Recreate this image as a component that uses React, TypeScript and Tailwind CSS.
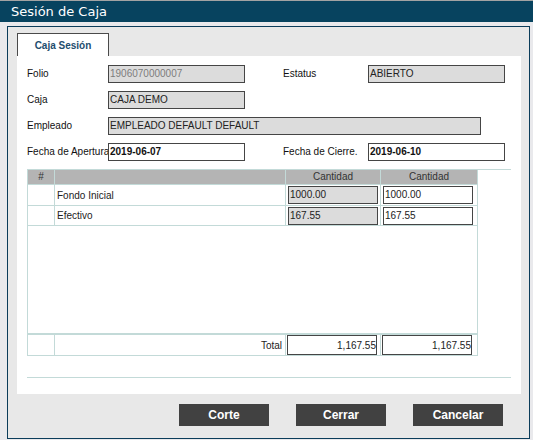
const teal = 'border-[#c3dad8]'

function Field({ value, width, gray = true, bold = false, muted = false }: { value: string; width: string; gray?: boolean; bold?: boolean; muted?: boolean }) {
  return (
    <div
      className={`${width} h-[18px] flex items-center border border-[#454545] pl-px text-[10px] leading-none ${
        gray ? 'bg-[#dcdcdc]' : 'bg-white'
      } ${bold ? 'font-bold text-[#111]' : muted ? 'text-[#7d7d7d]' : 'text-[#222]'}`}
    >
      {value}
    </div>
  )
}

function Label({ text, width }: { text: string; width: string }) {
  return <div className={`${width} text-[10px] text-[#111] leading-none whitespace-nowrap`}>{text}</div>
}

function Button({ text }: { text: string }) {
  return (
    <button className="w-[90px] h-[22px] bg-[#414141] text-white text-[12px] font-bold">{text}</button>
  )
}

export default function App() {
  return (
    <div className="w-[533px] h-[440px] bg-[#e9e9ec] overflow-hidden" style={{ fontFamily: '"Liberation Sans", Arial, sans-serif' }}>
      {/* Title bar */}
      <div className="border-t border-[#a3a3a3]">
        <div
          className="h-[21px] bg-[#07435f] text-white text-[13px] pl-[11px] flex items-center"
          style={{ fontFamily: '"DejaVu Sans", Verdana, sans-serif' }}
        >
          Sesión de Caja
        </div>
      </div>

      {/* Window */}
      <div className="mt-[4px] ml-[7px] w-[523px] h-[413px] border border-[#0b3c5a] bg-[#e8e8e8] pt-[6px]">
        <div className="ml-[9px] w-[92px] h-[23px] bg-white border border-b-0 border-[#4a4a4a] flex items-center justify-center text-[10px] font-bold text-[#1d4d6e]">
          Caja Sesión
        </div>

        <div className="ml-[9px] w-[504px] h-[338px] bg-white pt-[9px] pl-[10px]">
          <div className="flex flex-col gap-[8px]">
            <div className="flex items-center">
              <Label text="Folio" width="w-[81px]" />
              <Field value="1906070000007" width="w-[137px]" muted />
              <div className="w-[38px]" />
              <Label text="Estatus" width="w-[85px]" />
              <Field value="ABIERTO" width="w-[137px]" />
            </div>
            <div className="flex items-center">
              <Label text="Caja" width="w-[81px]" />
              <Field value="CAJA DEMO" width="w-[137px]" />
            </div>
            <div className="flex items-center">
              <Label text="Empleado" width="w-[81px]" />
              <Field value="EMPLEADO DEFAULT DEFAULT" width="w-[373px]" />
            </div>
            <div className="flex items-center">
              <Label text="Fecha de Apertura" width="w-[81px]" />
              <Field value="2019-06-07" width="w-[137px]" gray={false} bold />
              <div className="w-[38px]" />
              <Label text="Fecha de Cierre." width="w-[85px]" />
              <Field value="2019-06-10" width="w-[137px]" gray={false} bold />
            </div>
          </div>

          {/* Grid */}
          <div className={`mt-[8px] w-[484px] border-t ${teal}`}>
            <div className={`w-[451px] border-l border-r border-b ${teal} text-[10px] text-[#222]`}>
              <div className="flex h-[14px] bg-[#b4b4b4] text-[#333] leading-[14px]">
                <div className={`w-[27px] border-r ${teal} text-center`}>#</div>
                <div className={`w-[231px] border-r ${teal}`} />
                <div className={`w-[95px] border-r ${teal} text-center`}>Cantidad</div>
                <div className="w-[96px] text-center">Cantidad</div>
              </div>
              <div className={`flex h-[21px] border-t ${teal}`}>
                <div className={`w-[27px] border-r ${teal}`} />
                <div className={`w-[231px] border-r ${teal} pl-[2px] flex items-center`}>Fondo Inicial</div>
                <div className={`w-[95px] border-r ${teal} flex items-center pl-[2px]`}>
                  <Field value="1000.00" width="w-[90px]" />
                </div>
                <div className="w-[96px] flex items-center pl-[2px]">
                  <Field value="1000.00" width="w-[90px]" gray={false} />
                </div>
              </div>
              <div className={`flex h-[20px] border-t ${teal}`}>
                <div className={`w-[27px] border-r ${teal}`} />
                <div className={`w-[231px] border-r ${teal} pl-[2px] flex items-center`}>Efectivo</div>
                <div className={`w-[95px] border-r ${teal} flex items-center pl-[2px]`}>
                  <Field value="167.55" width="w-[90px]" />
                </div>
                <div className="w-[96px] flex items-center pl-[2px]">
                  <Field value="167.55" width="w-[90px]" gray={false} />
                </div>
              </div>
              <div className={`h-[108px] border-t ${teal}`} />
              <div className={`flex h-[22px] border-t-2 ${teal}`}>
                <div className={`w-[27px] border-r ${teal}`} />
                <div className={`w-[231px] border-r ${teal} pr-[3px] flex items-center justify-end`}>Total</div>
                <div className={`w-[95px] border-r ${teal} flex items-center pl-[1px]`}>
                  <div className="w-[90px] h-[20px] border border-[#454545] flex items-center justify-end text-[10px] text-[#222]">1,167.55</div>
                </div>
                <div className="w-[96px] flex items-center pl-[1px]">
                  <div className="w-[90px] h-[20px] border border-[#454545] flex items-center justify-end text-[10px] text-[#222]">1,167.55</div>
                </div>
              </div>
            </div>
          </div>

          <div className={`mt-[21px] w-[484px] border-t ${teal}`} />
        </div>

        <div className="mt-[10px] flex justify-end gap-[27px] pr-[26px]">
          <Button text="Corte" />
          <Button text="Cerrar" />
          <Button text="Cancelar" />
        </div>
      </div>
    </div>
  )
}
